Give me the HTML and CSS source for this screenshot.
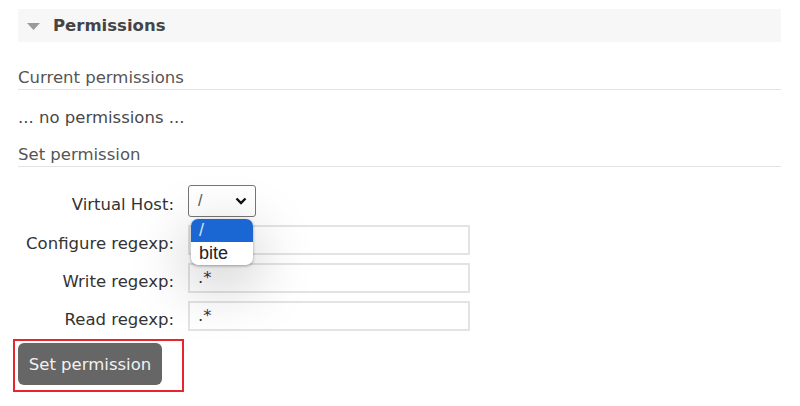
FILE: index.html
```html
<!DOCTYPE html>
<html>
<head>
<meta charset="utf-8">
<link rel="stylesheet" href="styles.css">
</head>
<body>
<div class="page">
  <div class="section-head">
    <svg class="tri" width="13" height="8" viewBox="0 0 13 8"><polygon points="0,0 13,0 6.5,7" fill="#9a9a9a"/></svg>
    <h2 class="section-title">Permissions</h2>
  </div>
  <h3 class="sub first">Current permissions</h3>
  <p class="empty">... no permissions ...</p>
  <h3 class="sub">Set permission</h3>
  <form class="perm-form">
    <label class="lbl">Virtual Host:</label>
    <div class="ctl">
      <div class="select">
        <span class="sel-val">/</span>
        <svg class="chev" width="12" height="8" viewBox="0 0 12 8"><polyline points="1.5,1.5 6,6 10.5,1.5" fill="none" stroke="#111" stroke-width="2.4"/></svg>
      </div>
      <div class="popup">
        <div class="opt active">/</div>
        <div class="opt">bite</div>
      </div>
    </div>
    <label class="lbl">Configure regexp:</label>
    <div class="ctl"><div class="input"></div></div>
    <label class="lbl">Write regexp:</label>
    <div class="ctl"><div class="input">.*</div></div>
    <label class="lbl">Read regexp:</label>
    <div class="ctl"><div class="input">.*</div></div>
  </form>
  <div class="btn-wrap">
    <button class="btn" type="button">Set permission</button>
  </div>
</div>
</body>
</html>
```

FILE: styles.css
```css
html, body {
  margin: 0;
  padding: 0;
  background: #fff;
}
body {
  font-family: "DejaVu Sans", Verdana, sans-serif;
  font-size: 16.5px;
  color: #484848;
}
.page {
  width: 763px;
  padding: 9px 0 0 18px;
}
.section-head {
  height: 33px;
  background: #f7f7f7;
  display: flex;
  align-items: center;
  padding-left: 9px;
}
.tri {
  display: block;
  margin-top: 2px;
}
.section-title {
  margin: 0 0 0 13px;
  font-size: 16.5px;
  font-weight: bold;
  color: #444;
}
.sub {
  margin: 0;
  font-size: 16.5px;
  font-weight: normal;
  color: #555;
  line-height: 20px;
  padding-bottom: 1px;
  border-bottom: 1px solid #e2e2e2;
}
.sub.first {
  margin-top: 26px;
}
.empty {
  margin: 18px 0 17px;
  line-height: 20px;
  color: #484848;
}
.perm-form {
  display: grid;
  grid-template-columns: 156px 282px;
  column-gap: 14px;
  row-gap: 8px;
  align-items: center;
  margin-top: 18px;
}
.lbl {
  text-align: right;
  color: #333;
  line-height: 20px;
  padding-top: 7px;
}
.ctl {
  position: relative;
}
.select {
  width: 68px;
  height: 32px;
  box-sizing: border-box;
  border: 1px solid #767676;
  border-radius: 3px;
  display: flex;
  align-items: center;
  justify-content: space-between;
  padding: 0 8px 0 9px;
  font-family: "Liberation Sans", Arial, sans-serif;
  font-size: 16px;
  color: #555;
}
.popup {
  position: absolute;
  left: 3px;
  top: 34px;
  width: 62px;
  background: #fff;
  border-radius: 7px;
  overflow: hidden;
  box-shadow: 0 1px 3px rgba(0,0,0,0.35), 0 16px 60px rgba(0,0,0,0.28);
  font-family: "Liberation Sans", Arial, sans-serif;
  font-size: 18px;
  color: #222;
  z-index: 2;
}
.opt {
  height: 23px;
  line-height: 23px;
  padding-left: 8px;
}
.opt.active {
  background: #1a67d4;
  color: #cfe0ff;
}
.input {
  height: 30px;
  box-sizing: border-box;
  border: 2px solid #e3e3e3;
  padding: 0 8px;
  line-height: 26px;
  font-size: 16.5px;
  color: #333;
}
.btn-wrap {
  margin: 8px 0 0 -5px;
  width: 164px;
  height: 47px;
  border: 2px solid #e8242c;
  padding: 2px 0 0 3px;
}
.btn {
  width: 144px;
  height: 42px;
  background: #666;
  color: #f2f2f2;
  border: none;
  border-radius: 6px;
  font-family: "DejaVu Sans", Verdana, sans-serif;
  font-size: 16.5px;
  padding: 0;
}
```
